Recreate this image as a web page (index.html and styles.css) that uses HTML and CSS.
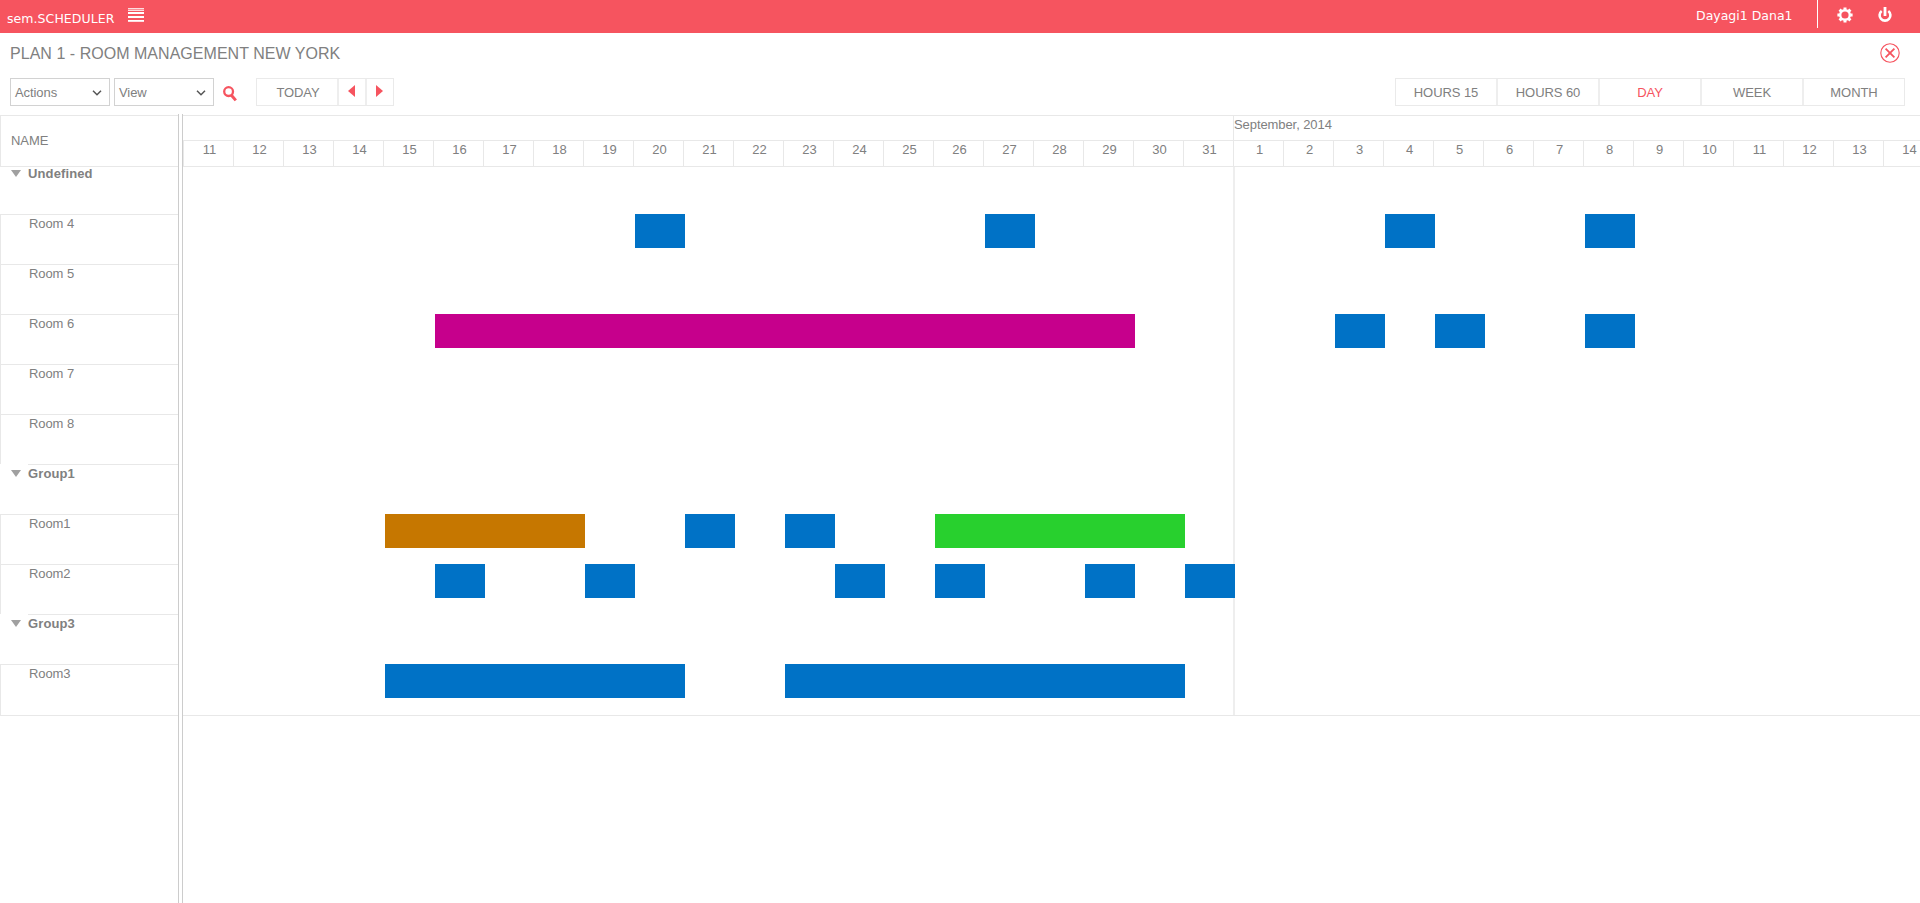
FILE: index.html
```html
<!DOCTYPE html>
<html lang="en">
<head>
<meta charset="utf-8">
<title>sem.SCHEDULER</title>
<link rel="stylesheet" href="styles.css">
</head>
<body>
<header class="topbar">
  <span class="brand">sem.SCHEDULER</span>
  <svg class="menu-icon" width="16" height="14" viewBox="0 0 16 14"><path d="M0 0h16v1H0zM0 2h16v1H0zM0 13h16v1H0z" fill="#fff" fill-opacity=".8"/><path d="M0 1h16v1H0z" fill="#fff" fill-opacity=".35"/><path d="M0 4h16v2H0zM0 8h16v2H0zM0 12h16v1H0z" fill="#fff"/></svg>
  <span class="user">Dayagi1 Dana1</span>
  <span class="separator"></span>
  <svg class="gear" width="16" height="16" viewBox="0 0 16 16"><circle cx="8" cy="8" r="4.8" fill="none" stroke="#fff" stroke-width="2.4"/><g stroke="#fff" stroke-width="3"><path d="M8 .4v2.4M8 13.2v2.4M.4 8h2.4M13.2 8h2.4M2.6 2.6l1.8 1.8M13.4 2.6l-1.8 1.8M2.6 13.4l1.8-1.8M13.4 13.4l-1.8-1.8"/></g></svg>
  <svg class="power" width="14" height="16" viewBox="0 0 14 16"><path d="M3.7 4a5.4 5.4 0 1 0 6.6 0" fill="none" stroke="#fff" stroke-width="2.6"/><path d="M7 0v9" stroke="#fff" stroke-width="2.8"/></svg>
</header>
<div class="title-row">
  <h1 class="title">PLAN 1 - ROOM MANAGEMENT NEW YORK</h1>
  <svg class="close" width="20" height="20" viewBox="0 0 20 20"><circle cx="10" cy="10" r="9.2" fill="none" stroke="#f6545f" stroke-width="1.1"/><path d="M5.6 5.6l8.8 8.8M14.4 5.6l-8.8 8.8" stroke="#f6545f" stroke-width="1.8"/></svg>
</div>
<div class="toolbar">
  <div class="select">Actions<svg width="10" height="6" viewBox="0 0 10 6"><path d="M1 .8l4 4 4-4" fill="none" stroke="#555" stroke-width="1.5"/></svg></div>
  <div class="select">View<svg width="10" height="6" viewBox="0 0 10 6"><path d="M1 .8l4 4 4-4" fill="none" stroke="#555" stroke-width="1.5"/></svg></div>
  <svg class="search" width="14" height="16" viewBox="0 0 14 16"><circle cx="5.6" cy="5.6" r="4.4" fill="none" stroke="#f6545f" stroke-width="2.3"/><path d="M8.2 9l4.6 5.4" stroke="#f6545f" stroke-width="3"/></svg>
  <div class="pager">
    <span class="today">TODAY</span>
    <span class="step"><svg width="7" height="12" viewBox="0 0 7 12"><path d="M7 0v12L0 6z" fill="#f6545f"/></svg></span>
    <span class="step"><svg width="7" height="12" viewBox="0 0 7 12"><path d="M0 0v12l7-6z" fill="#f6545f"/></svg></span>
  </div>
  <div class="scales">
    <span>HOURS 15</span><span>HOURS 60</span><span class="active">DAY</span><span>WEEK</span><span>MONTH</span>
  </div>
</div>
<main class="scheduler">
  <aside class="names">
    <div class="names-head">NAME</div>
    <div class="group first"><i class="caret"></i>Undefined</div>
    <div class="room">Room 4</div>
    <div class="room">Room 5</div>
    <div class="room">Room 6</div>
    <div class="room">Room 7</div>
    <div class="room">Room 8</div>
    <div class="group"><i class="caret"></i>Group1</div>
    <div class="room">Room1</div>
    <div class="room">Room2</div>
    <div class="group"><i class="caret"></i>Group3</div>
    <div class="room last">Room3</div>
  </aside>
  <div class="splitter"></div>
  <section class="timeline">
    <div class="months"><span class="month-a"></span><span class="month-b">September, 2014</span></div>
    <div class="days" id="days"></div>
    <div class="lanes" id="lanes"></div>
  </section>
</main>
<script src="script.js"></script>
</body>
</html>
```
FILE: styles.css
```css
* { box-sizing: border-box; }
body { margin: 0; height: 903px; overflow: hidden; background: #fff; color: #808080; font: 13px/16px "Liberation Sans", Arial, sans-serif; letter-spacing: -0.08px; display: flex; flex-direction: column; }
svg { display: block; flex: none; }
.topbar { height: 33px; flex: none; display: flex; background: #f6545f; color: #fff; font: 12.5px/16px "DejaVu Sans", Verdana, sans-serif; letter-spacing: 0; padding-left: 7px; }
.brand { width: 121px; padding-top: 11px; letter-spacing: 0.06px; white-space: nowrap; }
.menu-icon { margin-top: 8px; }
.user { margin-left: auto; padding-top: 8px; width: 121px; white-space: nowrap; }
.separator { width: 1px; height: 28px; background: #fff; }
.gear { margin: 7px 0 0 19px; }
.power { margin: 7px 28px 0 25px; }
.title-row { height: 45px; flex: none; display: flex; justify-content: space-between; padding: 10px 20px 0 10px; }
.title { margin: 1px 0 0; font-size: 16px; line-height: 20px; font-weight: normal; letter-spacing: 0.03px; white-space: nowrap; }
.toolbar { height: 36px; flex: none; display: flex; align-items: flex-start; padding: 0 15px 0 10px; }
.select { width: 100px; height: 28px; margin-right: 4px; border: 1px solid #d2d2d2; display: flex; align-items: center; justify-content: space-between; padding: 1px 7px 0 4px; }
.select svg { margin-top: 1px; }
.search { margin: 8px 19px 0 5px; }
.pager { display: flex; height: 28px; border: 1px solid #eaeaea; }
.today { width: 80px; line-height: 27px; padding-left: 2px; text-align: center; }
.step { width: 28px; border-left: 2px solid #eee; padding: 6px 0 0 9px; }
.scales { margin-left: auto; width: 510px; height: 28px; border: 1px solid #eaeaea; display: flex; line-height: 27px; text-align: center; }
.scales span { flex: 1; }
.scales span + span { border-left: 2px solid #eee; }
.scales .active { color: #f6545f; }
.scheduler { flex: 1; display: flex; min-height: 0; }
.names { width: 178px; flex: none; padding-top: 1px; }
.names-head { height: 51px; border-top: 1px solid #e8e8e8; border-left: 1px solid #e8e8e8; padding: 17px 0 0 10px; }
.group, .room { height: 50px; padding-top: 1px; }
.group { font-weight: bold; letter-spacing: 0.12px; display: flex; padding-top: 2px; background: linear-gradient(#e8e8e8, #e8e8e8) 28px 0 / 150px 1px no-repeat; }
.first { height: 48px; padding-top: 0; background-position: 0 0; background-size: 178px 1px; }
.caret { width: 10px; height: 7px; margin: 4px 7px 0 11px; background: #a0a0a0; clip-path: polygon(0 0, 100% 0, 50% 100%); }
.room { border-top: 1px solid #e8e8e8; border-left: 1px solid #e8e8e8; padding-left: 28px; }
.last { height: 52px; border-bottom: 1px solid #e8e8e8; }
.splitter { width: 5px; flex: none; border: solid #ccc; border-width: 0 1px; }
.timeline { flex: 1; min-width: 0; overflow: hidden; padding-top: 1px; }
.months { height: 25px; border-top: 1px solid #e8e8e8; display: flex; }
.month-a { width: 1050px; flex: none; }
.month-b { border-left: 1px solid #e8e8e8; padding-top: 1px; }
.days { height: 26px; border-top: 1px solid #e8e8e8; display: flex; }
.day { width: 50px; flex: none; border-left: 1px solid #e8e8e8; padding: 1px 0 0 2px; text-align: center; }
.lanes { height: 550px; border: solid #e8e8e8; border-width: 1px 0; background: linear-gradient(#eee, #eee) 1050px 0 / 2px 100% no-repeat; }
.lane { height: 50px; display: grid; grid-template-columns: repeat(35, 50px); padding-left: 2px; }
.lane:first-child { height: 47px; }
.bar { height: 34px; grid-row: 1; }
.blue { background: #0072c6; }
.magenta { background: #c6008c; }
.orange { background: #c67700; }
.green { background: #28d02e; }
```
FILE: script.js
```js
// Day columns run from the 11th to the 31st, then from 1 September.
const days = document.getElementById('days');
for (let i = 0; i < 35; i++) {
  const d = document.createElement('span');
  d.className = 'day';
  d.textContent = i < 21 ? i + 11 : i - 20;
  days.append(d);
}
// Bookings per lane: [first column, number of days, colour]
const bookings = [
  [],
  [[9, 1, 'blue'], [16, 1, 'blue'], [24, 1, 'blue'], [28, 1, 'blue']],
  [],
  [[5, 14, 'magenta'], [23, 1, 'blue'], [25, 1, 'blue'], [28, 1, 'blue']],
  [], [], [],
  [[4, 4, 'orange'], [10, 1, 'blue'], [12, 1, 'blue'], [15, 5, 'green']],
  [[5, 1, 'blue'], [8, 1, 'blue'], [13, 1, 'blue'], [15, 1, 'blue'], [18, 1, 'blue'], [20, 1, 'blue']],
  [],
  [[4, 6, 'blue'], [12, 8, 'blue']]
];
const lanes = document.getElementById('lanes');
for (const items of bookings) {
  const lane = document.createElement('div');
  lane.className = 'lane';
  for (const [start, span, colour] of items) {
    const bar = document.createElement('div');
    bar.className = 'bar ' + colour;
    bar.style.gridColumn = (start + 1) + ' / span ' + span;
    lane.append(bar);
  }
  lanes.append(lane);
}
```
